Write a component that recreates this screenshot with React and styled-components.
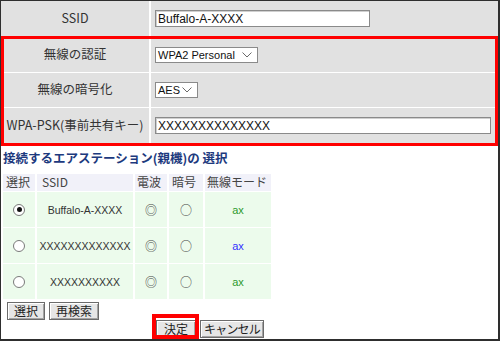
import React from "react";
import styled, { createGlobalStyle } from "styled-components";

const Global = createGlobalStyle`
  html, body { margin: 0; padding: 0; background: #fff; }
  body { font-family: "Noto Sans CJK JP", "Liberation Sans", sans-serif; }
`;

const Frame = styled.div`
  position: relative;
  width: 500px;
  height: 341px;
  box-sizing: border-box;
  border-style: solid;
  border-color: #2e2e2e;
  border-width: 1px 2px 2px 1px;
  background: #fff;
  overflow: hidden;
`;

const FormTable = styled.div`
  display: grid;
  grid-template-rows: 35px 35px 34px 35px;
  row-gap: 1px;
  background: #fff;
`;

const FormRow = styled.div`
  display: grid;
  grid-template-columns: 148px 1fr;
  column-gap: 2px;
`;

const Label = styled.div`
  background: #e1e1e1;
  display: flex;
  align-items: center;
  justify-content: center;
  padding-bottom: 2px;
  box-sizing: border-box;
  font-size: 12.5px;
  line-height: 16px;
  color: #333;
  white-space: nowrap;
`;

const Value = styled.div`
  background: #e1e1e1;
  display: flex;
  align-items: center;
  padding-left: 4px;
`;

const TextInput = styled.input`
  box-sizing: border-box;
  width: ${(p) => p.$w}px;
  height: 17px;
  margin: 0;
  padding: 0 2px;
  border: 1px solid #8a8a8a;
  box-shadow: inset 1px 1px 0 #cfcfcf;
  background: #fff;
  font-family: "Liberation Sans", "Noto Sans CJK JP", sans-serif;
  font-size: 12px;
  color: #111;
  outline: none;
`;

const SelectBox = styled.div`
  box-sizing: border-box;
  width: ${(p) => p.$w}px;
  height: 16px;
  border: 1px solid #8a8a8a;
  background: #fff;
  display: flex;
  align-items: center;
  justify-content: space-between;
  padding: 0 5px 0 2px;
  font-family: "Liberation Sans", "Noto Sans CJK JP", sans-serif;
  font-size: 11px;
  color: #111;
`;

const Title = styled.div`
  margin: 6px 0 8px 2px;
  height: 17px;
  line-height: 17px;
  font-size: 12.5px;
  font-weight: bold;
  color: #1d3a7e;
  white-space: nowrap;
`;

const SelTable = styled.div`
  display: grid;
  width: max-content;
  margin-left: 2px;
  grid-template-columns: 32px 96px 32px 34px 66px;
  grid-template-rows: 17px 35px 35px 35px;
  column-gap: 2px;
  row-gap: 1px;
`;

const HeadCell = styled.div`
  background: #f1f1f9;
  display: flex;
  align-items: center;
  padding-left: ${(p) => p.$pad ?? 3}px;
  padding-bottom: 1px;
  box-sizing: border-box;
  font-size: 12px;
  line-height: 14px;
  color: #444;
  white-space: nowrap;
`;

const BodyCell = styled.div`
  background: #ecfbec;
  display: flex;
  align-items: center;
  justify-content: center;
  font-family: "Liberation Sans", "Noto Sans CJK JP", sans-serif;
  font-size: 10.5px;
  color: #333;
  white-space: nowrap;
`;

const Radio = styled.span`
  position: relative;
  width: 12px;
  height: 12px;
  box-sizing: border-box;
  border-radius: 50%;
  border: 1px solid #7a7a7a;
  background: #fff;
  &::after {
    content: "";
    display: ${(p) => (p.$checked ? "block" : "none")};
    position: absolute;
    left: 2.5px;
    top: 2.5px;
    width: 5px;
    height: 5px;
    border-radius: 50%;
    background: #111;
  }
`;

const Mark = styled.span`
  font-family: "Noto Sans CJK JP", sans-serif;
  font-size: 12px;
  line-height: 14px;
  color: #444;
`;

const Mode = styled.span`
  font-size: 11px;
  color: ${(p) => p.$color};
`;

const ButtonRow = styled.div`
  display: flex;
  gap: 4px;
  padding-left: ${(p) => p.$indent}px;
  margin-top: ${(p) => p.$top}px;
`;

const Button = styled.button`
  box-sizing: border-box;
  height: 18px;
  margin: 0;
  padding: 0 ${(p) => p.$pad ?? 6}px;
  border: 1px solid #6b6b6b;
  background: #e6e6e6;
  box-shadow: inset 1px 1px 0 #fff, inset -1px -1px 0 #a3a3a3;
  font-family: "Noto Sans CJK JP", sans-serif;
  font-size: 12px;
  line-height: 16px;
  letter-spacing: ${(p) => p.$ls ?? 0}px;
  color: #222;
  white-space: nowrap;
`;

const Highlight = styled.div`
  position: absolute;
  left: ${(p) => p.$x}px;
  top: ${(p) => p.$y}px;
  width: ${(p) => p.$w}px;
  height: ${(p) => p.$h}px;
  box-sizing: border-box;
  border: ${(p) => p.$b}px solid #ff0000;
  pointer-events: none;
`;

const Chevron = () => (
  <svg width="10" height="6" viewBox="0 0 10 6">
    <polyline points="0.5,0.5 5,5 9.5,0.5" fill="none" stroke="#6a6a6a" strokeWidth="1" />
  </svg>
);

const rows = [
  { ssid: "Buffalo-A-XXXX", checked: true, color: "#2e9a2e" },
  { ssid: "XXXXXXXXXXXXX", checked: false, color: "#3333ff" },
  { ssid: "XXXXXXXXXX", checked: false, color: "#2e9a2e" },
];

export default function App() {
  return (
    <>
      <Global />
      <Frame>
        <FormTable>
          <FormRow>
            <Label>SSID</Label>
            <Value>
              <TextInput $w={215} defaultValue="Buffalo-A-XXXX" readOnly />
            </Value>
          </FormRow>
          <FormRow>
            <Label>無線の認証</Label>
            <Value>
              <SelectBox $w={103}>
                <span>WPA2 Personal</span>
                <Chevron />
              </SelectBox>
            </Value>
          </FormRow>
          <FormRow>
            <Label>無線の暗号化</Label>
            <Value>
              <SelectBox $w={43}>
                <span>AES</span>
                <Chevron />
              </SelectBox>
            </Value>
          </FormRow>
          <FormRow>
            <Label>WPA-PSK(事前共有キー)</Label>
            <Value>
              <TextInput $w={336} defaultValue="XXXXXXXXXXXXXX" readOnly />
            </Value>
          </FormRow>
        </FormTable>

        <Title>接続するエアステーション(親機)の 選択</Title>

        <SelTable>
          <HeadCell>選択</HeadCell>
          <HeadCell $pad={5}>SSID</HeadCell>
          <HeadCell $pad={2}>電波</HeadCell>
          <HeadCell $pad={3}>暗号</HeadCell>
          <HeadCell $pad={2}>無線モード</HeadCell>
          {rows.map((r, i) => (
            <React.Fragment key={i}>
              <BodyCell>
                <Radio $checked={r.checked} />
              </BodyCell>
              <BodyCell>{r.ssid}</BodyCell>
              <BodyCell>
                <Mark>◎</Mark>
              </BodyCell>
              <BodyCell>
                <Mark>○</Mark>
              </BodyCell>
              <BodyCell>
                <Mode $color={r.color}>ax</Mode>
              </BodyCell>
            </React.Fragment>
          ))}
        </SelTable>

        <ButtonRow $indent={6} $top={3}>
          <Button>選択</Button>
          <Button>再検索</Button>
        </ButtonRow>
        <ButtonRow $indent={155} $top={0}>
          <Button $pad={7}>決定</Button>
          <Button $pad={3} $ls={-0.8}>キャンセル</Button>
        </ButtonRow>

        <Highlight $x={0} $y={35} $w={497} $h={110} $b={3} />
        <Highlight $x={151} $y={313} $w={47} $h={25} $b={4} />
      </Frame>
    </>
  );
}
